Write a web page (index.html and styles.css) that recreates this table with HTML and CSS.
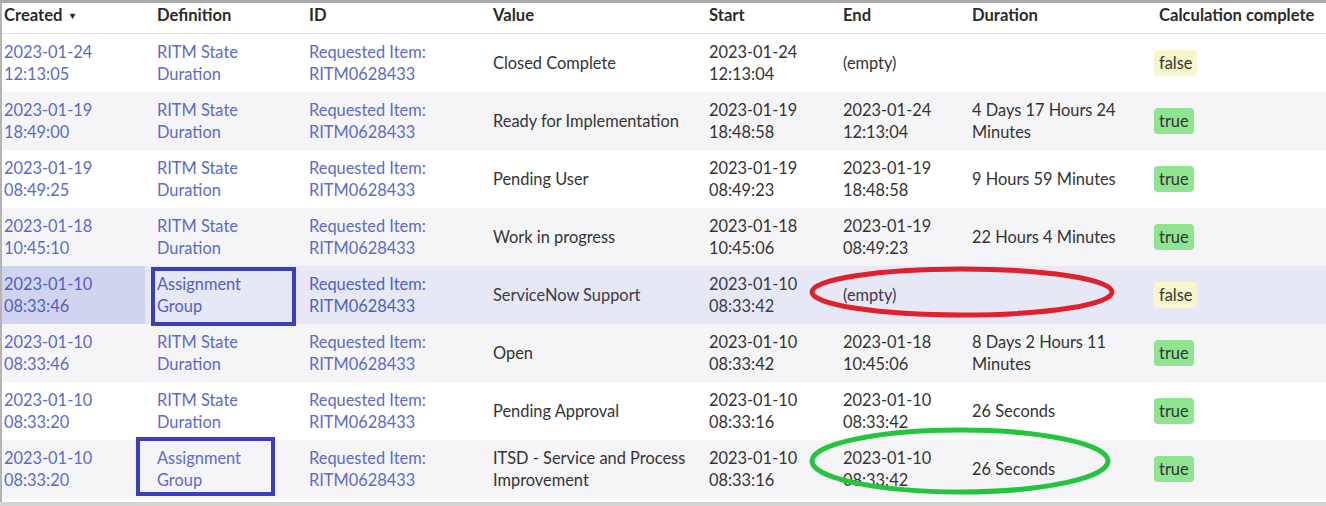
FILE: index.html
```html
<!DOCTYPE html>
<html>
<head>
<meta charset="utf-8">
<link rel="stylesheet" href="styles.css">
</head>
<body>
<div class="frame">
  <table class="list">
    <colgroup>
      <col class="c1"><col class="c2"><col class="c3"><col class="c4"><col class="c5"><col class="c6"><col class="c7"><col class="c8">
    </colgroup>
    <thead>
      <tr>
        <th class="first">Created <span class="caret">&#9662;</span></th>
        <th>Definition</th>
        <th>ID</th>
        <th>Value</th>
        <th>Start</th>
        <th>End</th>
        <th>Duration</th>
        <th>Calculation complete</th>
      </tr>
    </thead>
    <tbody>
      <tr>
        <td class="first link">2023-01-24<br>12:13:05</td>
        <td class="link">RITM State<br>Duration</td>
        <td class="link">Requested Item:<br>RITM0628433</td>
        <td>Closed Complete</td>
        <td>2023-01-24<br>12:13:04</td>
        <td>(empty)</td>
        <td></td>
        <td class="flag"><span class="badge no">false</span></td>
      </tr>
      <tr class="alt">
        <td class="first link">2023-01-19<br>18:49:00</td>
        <td class="link">RITM State<br>Duration</td>
        <td class="link">Requested Item:<br>RITM0628433</td>
        <td>Ready for Implementation</td>
        <td>2023-01-19<br>18:48:58</td>
        <td>2023-01-24<br>12:13:04</td>
        <td>4 Days 17 Hours 24<br>Minutes</td>
        <td class="flag"><span class="badge yes">true</span></td>
      </tr>
      <tr>
        <td class="first link">2023-01-19<br>08:49:25</td>
        <td class="link">RITM State<br>Duration</td>
        <td class="link">Requested Item:<br>RITM0628433</td>
        <td>Pending User</td>
        <td>2023-01-19<br>08:49:23</td>
        <td>2023-01-19<br>18:48:58</td>
        <td>9 Hours 59 Minutes</td>
        <td class="flag"><span class="badge yes">true</span></td>
      </tr>
      <tr class="alt">
        <td class="first link">2023-01-18<br>10:45:10</td>
        <td class="link">RITM State<br>Duration</td>
        <td class="link">Requested Item:<br>RITM0628433</td>
        <td>Work in progress</td>
        <td>2023-01-18<br>10:45:06</td>
        <td>2023-01-19<br>08:49:23</td>
        <td>22 Hours 4 Minutes</td>
        <td class="flag"><span class="badge yes">true</span></td>
      </tr>
      <tr class="hl">
        <td class="first link sel">2023-01-10<br>08:33:46</td>
        <td class="link">Assignment<br>Group</td>
        <td class="link">Requested Item:<br>RITM0628433</td>
        <td>ServiceNow Support</td>
        <td>2023-01-10<br>08:33:42</td>
        <td>(empty)</td>
        <td></td>
        <td class="flag"><span class="badge no">false</span></td>
      </tr>
      <tr class="alt">
        <td class="first link">2023-01-10<br>08:33:46</td>
        <td class="link">RITM State<br>Duration</td>
        <td class="link">Requested Item:<br>RITM0628433</td>
        <td>Open</td>
        <td>2023-01-10<br>08:33:42</td>
        <td>2023-01-18<br>10:45:06</td>
        <td>8 Days 2 Hours 11<br>Minutes</td>
        <td class="flag"><span class="badge yes">true</span></td>
      </tr>
      <tr>
        <td class="first link">2023-01-10<br>08:33:20</td>
        <td class="link">RITM State<br>Duration</td>
        <td class="link">Requested Item:<br>RITM0628433</td>
        <td>Pending Approval</td>
        <td>2023-01-10<br>08:33:16</td>
        <td>2023-01-10<br>08:33:42</td>
        <td>26 Seconds</td>
        <td class="flag"><span class="badge yes">true</span></td>
      </tr>
      <tr class="alt">
        <td class="first link">2023-01-10<br>08:33:20</td>
        <td class="link">Assignment<br>Group</td>
        <td class="link">Requested Item:<br>RITM0628433</td>
        <td>ITSD - Service and Process<br>Improvement</td>
        <td>2023-01-10<br>08:33:16</td>
        <td>2023-01-10<br>08:33:42</td>
        <td>26 Seconds</td>
        <td class="flag"><span class="badge yes">true</span></td>
      </tr>
    </tbody>
  </table>
  <svg class="marks" width="1324" height="497" viewBox="0 0 1324 497" xmlns="http://www.w3.org/2000/svg">
    <rect x="151" y="266" width="141" height="55" fill="none" stroke="#3a3fc2" stroke-width="4"/>
    <rect x="136" y="436" width="135" height="55" fill="none" stroke="#3a3fc2" stroke-width="4"/>
    <ellipse cx="960" cy="289" rx="150" ry="23" fill="none" stroke="#e0202c" stroke-width="5"/>
    <ellipse cx="958" cy="458" rx="148" ry="31" fill="none" stroke="#22c53c" stroke-width="5"/>
  </svg>
</div>
</body>
</html>
```

FILE: styles.css
```css
html, body {
  margin: 0;
  padding: 0;
}
body {
  width: 1326px;
  height: 506px;
  background: #d4d4d4;
  overflow: hidden;
  font-family: Lato, "Open Sans", "Liberation Sans", sans-serif;
  font-size: 16.4px;
  color: #333333;
}
.frame {
  position: relative;
  background: #ffffff;
  border-top: 3px solid #aaaaaa;
  border-left: 2px solid #b4b4b4;
  padding-bottom: 4px;
}
.list {
  width: 1324px;
  table-layout: fixed;
  border-collapse: collapse;
}
.c1 { width: 143px; }
.c2 { width: 152px; }
.c3 { width: 184px; }
.c4 { width: 216px; }
.c5 { width: 134px; }
.c6 { width: 129px; }
.c7 { width: 187px; }
.c8 { width: 179px; }
th {
  text-align: left;
  font-weight: 700;
  font-size: 16.6px;
  color: #2b2b2b;
  height: 30px;
  box-sizing: border-box;
  padding: 0 0 6px 12px;
  line-height: 22px;
  vertical-align: middle;
  border-bottom: 1px solid #e2e2e2;
  white-space: nowrap;
}
.caret {
  font-size: 10px;
  vertical-align: 2px;
  margin-left: 4px;
}
td {
  height: 58px;
  box-sizing: border-box;
  padding: 7px 4px 7px 12px;
  line-height: 22px;
  vertical-align: middle;
  white-space: nowrap;
}
th.first, td.first {
  padding-left: 2px;
}
td.flag {
  padding-left: 7px;
}
.link {
  color: #5a69d4;
}
tr.alt td {
  background: #f5f5f7;
}
tr.hl td {
  background: #e6e8f5;
  color: #3a3a4a;
}
tr.hl td.link {
  color: #5060c8;
}
tr.hl td.sel {
  background: #d1d4ee;
}
.badge {
  display: inline-block;
  padding: 2px 5px;
  border-radius: 4px;
  line-height: 22px;
  color: #333333;
}
.badge.no {
  background: #f7f6cd;
}
.badge.yes {
  background: #8fe48f;
}
.marks {
  position: absolute;
  left: 0;
  top: 0;
  pointer-events: none;
}
```
